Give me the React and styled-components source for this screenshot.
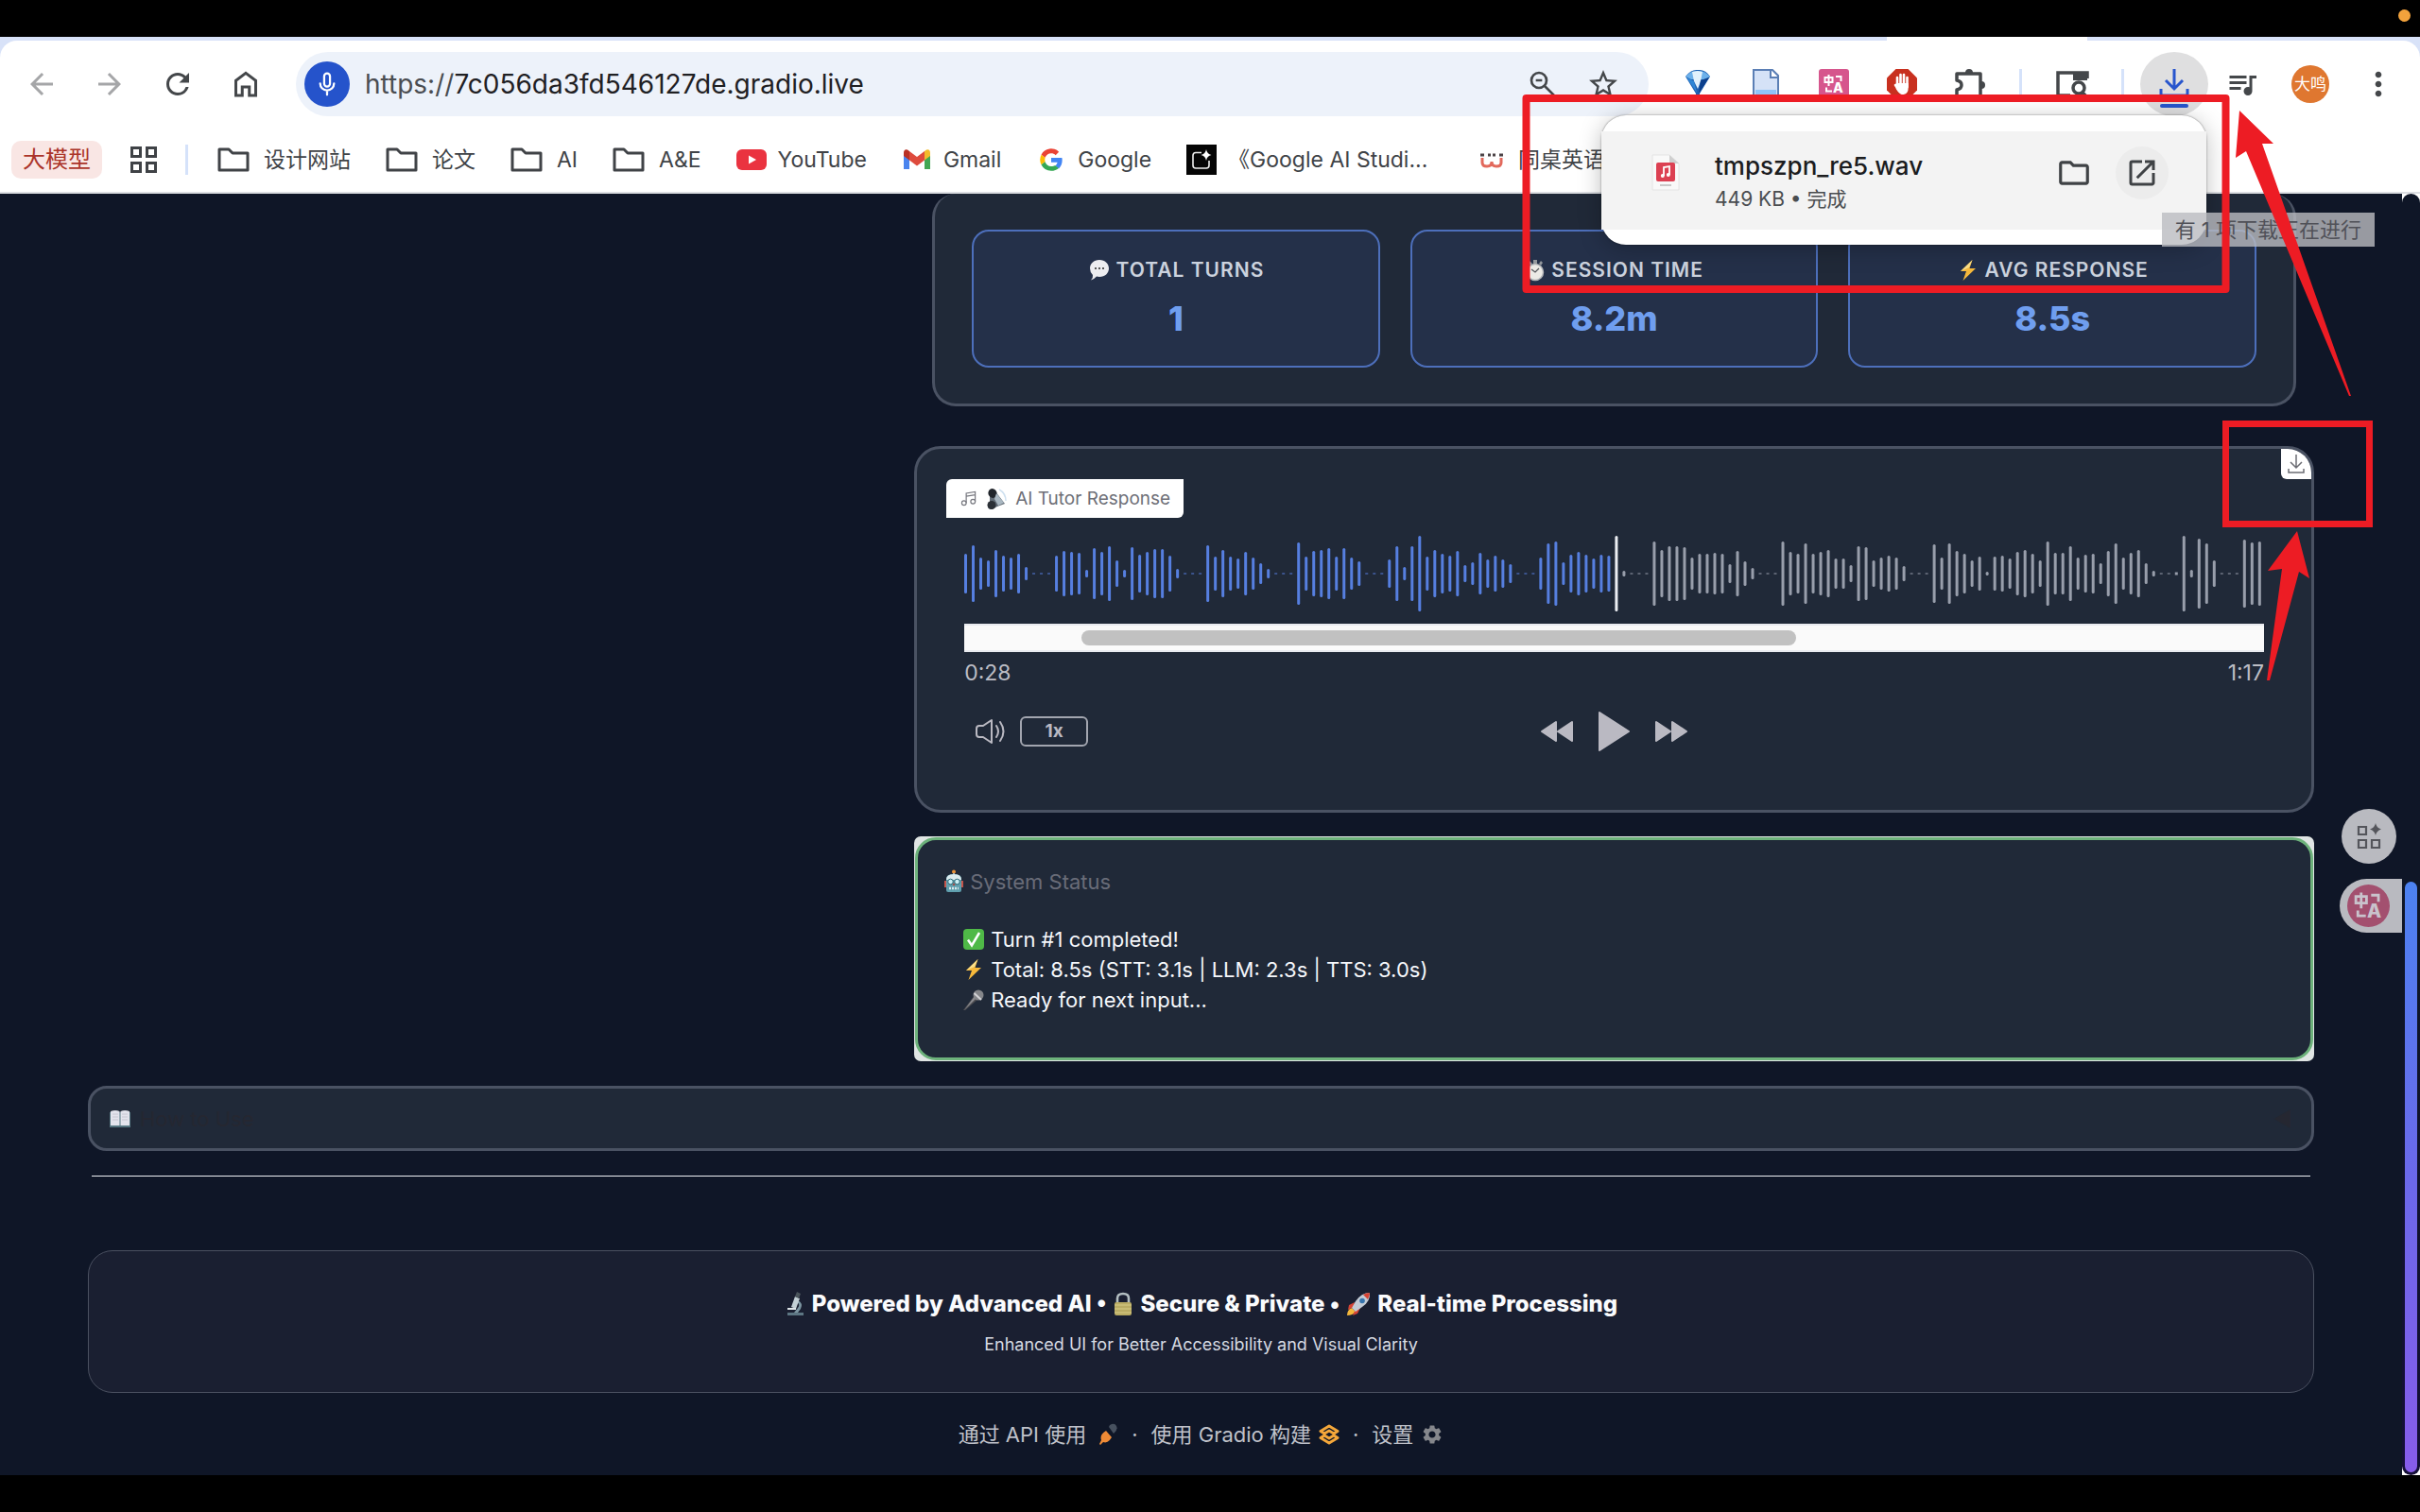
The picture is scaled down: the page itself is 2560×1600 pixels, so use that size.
import React from 'react';
import styled, { createGlobalStyle } from 'styled-components';
import {
  MdArrowBack,
  MdArrowForward,
  MdRefresh,
  MdStarOutline,
  MdMoreVert,
  MdQueueMusic,
  MdOutlineFolder,
  MdOpenInNew,
  MdSettings,
} from 'react-icons/md';

const GlobalStyle = createGlobalStyle`
  * {
    box-sizing: border-box;
  }

  body {
    margin: 0;
    background: #000;
    font-family: Inter, 'Noto Sans CJK SC', sans-serif;
  }

  button, input, textarea {
    font-family: inherit;
    margin: 0;
    padding: 0;
    border: 0;
    background: none;
    outline: none;
  }

  svg {
    display: block;
    flex: none;
  }
`;

/* ---------- layout ---------- */

const Screen = styled.div`
  position: relative;
  display: flex;
  flex-direction: column;
  min-height: 100vh;
  overflow: hidden;
`;

const MenuBar = styled.div`
  display: flex;
  align-items: center;
  justify-content: flex-end;
  height: 39px;
  padding: 0 10px 7px;
  background: #000;
`;

const RecordingDot = styled.span`
  width: 13px;
  height: 13px;
  border-radius: 50%;
  background: #f2a23c;
`;

const BottomBar = styled.div`
  height: 39px;
  background: #000;
`;

/* ---------- browser chrome ---------- */

const Chrome = styled.header`
  background: #d8e2f8;
  border-bottom: 2px solid #dcdee2;
`;

const TabStrip = styled.div`
  display: flex;
  justify-content: flex-end;
  height: 4px;
  padding-right: 352px;
`;

const ActiveTab = styled.div`
  width: 212px;
  background: #fff;
`;

const Bars = styled.div`
  background: #fff;
  border-radius: 18px 18px 0 0;
`;

const Toolbar = styled.div`
  display: flex;
  align-items: center;
  padding: 12px 8px 0;
`;

const ToolButton = styled.button`
  display: flex;
  align-items: center;
  justify-content: center;
  width: ${props => props.$width || 72}px;
  height: 68px;
  color: ${props => (props.$muted ? '#a5a6a8' : '#44474a')};
`;

const DownloadTool = styled(ToolButton)`
  border-radius: 50%;
  background: #dfdfe0;
  color: #2755cd;
`;

const Omnibox = styled.div`
  display: flex;
  align-items: center;
  flex: 1;
  height: 68px;
  margin: 0 16px 0 17px;
  padding: 0 16px 0 9px;
  border-radius: 34px;
  background: #edf2fa;
`;

const MicBadge = styled.span`
  display: flex;
  align-items: center;
  justify-content: center;
  width: 48px;
  height: 48px;
  margin-right: 16px;
  border-radius: 50%;
  background: #2553cb;
`;

const Scheme = styled.label`
  font-size: 28px;
  line-height: 36px;
  color: #4a4d51;
`;

const Address = styled.input`
  flex: 1;
  min-width: 0;
  font-size: 28px;
  line-height: 36px;
  color: #1f2023;
`;

const Divider = styled.span`
  width: 3px;
  height: 32px;
  margin: 0 17px 0 16px;
  background: #d5e2fa;
`;

const Avatar = styled.span`
  width: 40px;
  border-radius: 50%;
  background: #df7730;
  color: #fff;
  font-size: 17px;
  line-height: 40px;
  text-align: center;
`;

const Bookmarks = styled.nav`
  display: flex;
  align-items: center;
  gap: 37px;
  height: 80px;
  padding: 12px 12px 0;
  overflow: hidden;
`;

const GroupChip = styled.button`
  height: 40px;
  padding: 0 12px;
  margin-right: -8px;
  border-radius: 10px;
  background: #f9e6e4;
  color: #ab342a;
  font-size: 24px;
  line-height: 40px;
  white-space: nowrap;
`;

const BookmarkDivider = styled.span`
  flex: none;
  width: 3px;
  height: 32px;
  margin: 0 -6px 0 -8px;
  background: #d5e2fa;
`;

const Bookmark = styled.a`
  display: flex;
  align-items: center;
  flex: none;
  gap: ${props => (props.$folder ? 13 : 12)}px;
  min-width: ${props => props.$min || 0}px;
  color: #404347;
  font-size: 23px;
  line-height: 32px;
  text-decoration: none;
  white-space: nowrap;
`;

/* ---------- downloads bubble ---------- */

const DownloadBubble = styled.section`
  position: absolute;
  top: 122px;
  right: 226px;
  width: 640px;
  padding: 17px 0 16px;
  border-radius: 26px;
  background: #fff;
  box-shadow: 0 0 2px rgba(0, 0, 0, 0.5), 0 4px 24px rgba(0, 0, 0, 0.25);
`;

const DownloadRow = styled.div`
  display: flex;
  align-items: center;
  height: 104px;
  padding: 0 40px 16px 52px;
  background: #f3f3f3;
`;

const DownloadInfo = styled.div`
  flex: 1;
  padding-top: 20px;
  margin-left: 36px;
`;

const FileName = styled.div`
  color: #1c1d1f;
  font-size: 26px;
  font-weight: 500;
  line-height: 36px;
`;

const FileMeta = styled.div`
  color: #4a4d50;
  font-size: 21px;
  line-height: 34px;
`;

const BubbleButton = styled.button`
  display: flex;
  align-items: center;
  justify-content: center;
  width: 56px;
  height: 56px;
  margin-left: 16px;
  border-radius: 50%;
  background: ${props => (props.$hover ? '#ececec' : 'transparent')};
  color: #3f4245;
`;

const Tooltip = styled.div`
  position: absolute;
  top: 225px;
  right: 48px;
  padding: 0 14px;
  background: rgba(186, 187, 192, 0.8);
  color: #505158;
  font-size: 22px;
  line-height: 36px;
  white-space: nowrap;
`;

const Annotations = styled.svg`
  position: absolute;
  top: 0;
  right: 0;
  pointer-events: none;
`;

/* ---------- app ---------- */

const Viewport = styled.div`
  display: flex;
  flex: 1;
  background: #0f1627;
`;

const Content = styled.main`
  flex: 1;
  padding: 0 93px;
`;

const Columns = styled.div`
  display: grid;
  grid-template-columns: 4fr 7fr;
  gap: 28px;
`;

const RightColumn = styled.div`
  grid-column: 2;
  display: flex;
  flex-direction: column;
`;

const StatsPanel = styled.section`
  display: grid;
  grid-template-columns: repeat(3, 1fr);
  gap: 32px;
  margin: 0 19px 42px;
  padding: 38px 39px;
  border: 3px solid #4a5263;
  border-top: 0;
  border-radius: 25px;
  background: #202938;
`;

const StatCard = styled.div`
  padding: 25px 16px 26px;
  border: 2px solid #4d6fbb;
  border-radius: 18px;
  background: #243049;
  text-align: center;
`;

const StatLabel = styled.div`
  display: flex;
  align-items: center;
  justify-content: center;
  gap: 6px;
  color: #cbd2de;
  font-size: 21px;
  font-weight: 600;
  letter-spacing: 1px;
  line-height: 32px;
`;

const StatValue = styled.div`
  margin-top: 11px;
  color: #6f9eef;
  font-size: 36px;
  font-weight: 800;
  line-height: 48px;
`;

const AudioPanel = styled.section`
  position: relative;
  padding: 32px 31px 62px;
  border: 3px solid #4a5263;
  border-radius: 28px;
  background: #202938;
  overflow: hidden;
`;

const AudioLabel = styled.div`
  display: inline-flex;
  align-items: center;
  gap: 8px;
  height: 41px;
  padding: 0 14px;
  border-radius: 6px 0;
  background: #fff;
  color: #6e6f77;
  font-size: 19px;
  line-height: 28px;
`;

const Player = styled.div`
  padding: 19px 19px 0;
`;

const Waveform = styled.svg`
  width: 100%;
  height: 80px;
`;

const ScrollTrack = styled.div`
  height: 30px;
  margin-top: 13px;
  padding: 5px 0;
  border: solid #e9ebf0;
  border-width: 2px 0;
  background: #fafafa;
`;

const ScrollThumb = styled.div`
  width: 55%;
  height: 16px;
  margin: 0 9%;
  border-radius: 8px;
  background: #c1c1c1;
`;

const Times = styled.div`
  display: flex;
  justify-content: space-between;
  margin-top: 6px;
  color: #bcbdc5;
  font-size: 23px;
  line-height: 32px;
`;

const Controls = styled.div`
  display: grid;
  grid-template-columns: 1fr auto 1fr;
  align-items: center;
  height: 42px;
  margin-top: 25px;
`;

const ControlGroup = styled.div`
  display: flex;
  align-items: center;
  gap: ${props => props.$gap}px;
  padding-left: ${props => props.$inset || 0}px;
`;

const IconButton = styled.button`
  color: #bab9c2;
`;

const SpeedButton = styled.button`
  width: 72px;
  height: 32px;
  border: 2px solid #a2a5af;
  border-radius: 6px;
  color: #bab9c2;
  font-size: 19px;
  font-weight: 700;
  line-height: 28px;
`;

const CornerDownload = styled.button`
  position: absolute;
  top: 0;
  right: 0;
  display: flex;
  align-items: center;
  justify-content: center;
  width: 32px;
  height: 32px;
  border-radius: 0 0 0 6px;
  background: #fff;
`;

const StatusBlock = styled.section`
  margin: 25px 0 26px;
  padding: 1px;
  border-radius: 7px;
  background: #e0e5e4;
`;

const StatusInner = styled.div`
  padding: 28px 28px 45px;
  border: 3px solid #6db27b;
  border-radius: 22px;
  background: #202938;
`;

const StatusLabel = styled.label`
  display: flex;
  align-items: center;
  gap: 7px;
  color: #696c78;
  font-size: 22px;
  line-height: 32px;
`;

const StatusBody = styled.div`
  display: flex;
  gap: 6px;
  margin: 29px 19px 0;
`;

const StatusIcons = styled.div`
  display: grid;
  grid-auto-rows: 32px;
  align-items: center;
`;

const StatusText = styled.textarea`
  flex: 1;
  height: 96px;
  resize: none;
  overflow: hidden;
  color: #f5f7fb;
  font-size: 22px;
  line-height: 32px;
`;

const Accordion = styled.button`
  display: flex;
  align-items: center;
  justify-content: space-between;
  width: 100%;
  height: 69px;
  padding: 0 20px;
  border: 3px solid #4a5263;
  border-radius: 20px;
  background: #202938;
  color: #252731;
  font-size: 22px;
  line-height: 32px;
`;

const AccordionTitle = styled.span`
  display: flex;
  align-items: center;
  gap: 10px;
`;

const Rule = styled.hr`
  height: 1px;
  margin: 26px 4px 78px;
  border: 0;
  background: #eef1f5;
`;

const FooterCard = styled.div`
  padding: 38px 24px 36px;
  border: 1px solid #4a5060;
  border-radius: 26px;
  background: #1a1f31;
  text-align: center;
`;

const FooterTitle = styled.div`
  display: flex;
  align-items: center;
  justify-content: center;
  gap: 7px;
  color: #fafbfd;
  font-size: 24px;
  font-weight: 800;
  line-height: 36px;
`;

const FooterNote = styled.div`
  margin-top: 11px;
  color: #d6dae2;
  font-size: 18px;
  line-height: 28px;
`;

const FooterLinks = styled.footer`
  display: flex;
  align-items: center;
  justify-content: center;
  gap: 14px;
  margin-top: 28px;
  color: #bfc1c9;
  font-size: 22px;
  line-height: 32px;
`;

const FooterLink = styled.a`
  display: flex;
  align-items: center;
  gap: 8px;
  color: inherit;
  text-decoration: none;
`;

const PageScroll = styled.div`
  display: flex;
  align-items: flex-end;
  width: 19px;
  background: #fff;
`;

const PageScrollTrack = styled.div`
  display: flex;
  flex-direction: column;
  justify-content: flex-end;
  width: 100%;
  height: 100%;
  padding: 3px;
  border-radius: 10px;
  background: linear-gradient(#0f1627 60%, #150f38);
`;

const PageScrollThumb = styled.div`
  flex: 0 0 46.3%;
  border-radius: 7px;
  background: linear-gradient(#4c82f1, #6b68ea 50%, #875cea);
`;

const FloatingTools = styled.div`
  position: absolute;
  top: 856px;
  right: 19px;
  display: flex;
  flex-direction: column;
  align-items: flex-end;
  gap: 16px;
`;

const RoundTool = styled.button`
  display: flex;
  align-items: center;
  justify-content: center;
  width: 58px;
  height: 58px;
  margin-right: 6px;
  border-radius: 50%;
  background: #b9bac0;
`;

const TranslateTool = styled.button`
  display: flex;
  align-items: center;
  width: 66px;
  height: 57px;
  padding-left: 8px;
  border-radius: 29px 0 0 29px;
  background: #b9bac0;
`;

/* ---------- drawings ---------- */

const HomeIcon = () => (
  <svg width="36" height="36" viewBox="0 0 24 24" fill="none" stroke="currentColor" strokeWidth="2">
    <path d="M5 20V9.500L12 4.200l7 5.300V20h-4.500v-6h-5v6z" />
  </svg>
);

const MicIcon = () => (
  <svg width="32" height="32" viewBox="0 0 24 24" fill="none" stroke="#fff" strokeWidth="1.700" strokeLinecap="round">
    <rect x="9.700" y="3.500" width="4.600" height="10.500" rx="2.300" />
    <path d="M6.500 11.500a5.500 5.500 0 0 0 11 0M12 17v3.500" />
  </svg>
);

const ZoomOutIcon = () => (
  <svg width="32" height="32" viewBox="0 0 24 24" fill="none" stroke="currentColor" strokeWidth="2">
    <circle cx="9" cy="9" r="6" />
    <path d="M6.500 9h5M13.500 13.500l8 8" />
  </svg>
);

const PuzzleIcon = () => (
  <svg width="36" height="38" viewBox="0 0 36 38" fill="none" stroke="currentColor" strokeWidth="3.500" strokeLinejoin="round">
    <path d="M4 8h25v25H4v-8q5-1 5-5t-5-5z" />
    <path d="M13 7a4 4 0 0 1 8 0zM30 16a4 4 0 0 1 0 8z" fill="currentColor" stroke="none" />
  </svg>
);

const DiamondIcon = () => (
  <svg width="32" height="36" viewBox="0 0 32 36">
    <path d="M3 10Q9 2 16 3q8-1 13 7L18 28v6h-4v-6z" fill="#1d5fb0" />
    <path d="M3 10Q9 3 16 4q7-1 13 6l-6 3H9z" fill="#6cb0ea" />
    <path d="M10 5l6-1 5 1-2 10-3 8-4-8z" fill="#e2f1fc" />
    <path d="M19 14l9-3-11 17z" fill="#0c3f8c" />
    <path d="M4 11l8 4 3 12z" fill="#2f86d6" />
  </svg>
);

const DocIcon = () => (
  <svg width="32" height="36" viewBox="0 0 32 36">
    <path d="M3 3h20l6 6v24H3z" fill="#d5e2f7" stroke="#5b7fb5" strokeWidth="2" />
    <path d="M21 3v8h8" fill="#fff" stroke="#5b7fb5" strokeWidth="2" />
    <path d="M5 24h22v8H5z" fill="#8fc3f8" />
  </svg>
);

const TranslateGlyph = ({ size, round, fill, color }) => (
  <svg width={size} height={size} viewBox="0 0 32 32">
    <rect width="32" height="32" rx={round ? 16 : 3} fill={fill} />
    <g fill="none" stroke={color} strokeWidth="2">
      <path d="M6.500 9h8v5h-8zM10.500 6v12" />
      <path d="M18 8h5.500v5M8 19.500v4h6" />
    </g>
    <text x="15" y="25" fontSize="14" fontWeight="800" fill={color}>A</text>
  </svg>
);

const HandIcon = () => (
  <svg width="32" height="32" viewBox="0 0 32 32">
    <path d="M9.500 0h13L32 9.500v13L22.500 32h-13L0 22.500v-13z" fill="#c8301f" />
    <g stroke="#fff" strokeWidth="2.600" strokeLinecap="round">
      <path d="M11 9v9M14.500 6v12M18 6v12M21.500 9v10M9 17l4 6" />
    </g>
    <path d="M9.700 15h13v5q0 6-5 7h-2q-3-1-6-6z" fill="#fff" />
  </svg>
);

const TabSearchIcon = () => (
  <svg width="36" height="32" viewBox="0 0 36 32" fill="none" stroke="currentColor" strokeWidth="3.500">
    <path d="M16 28H3V4h31v6" />
    <path d="M19 4h15v8H19z" fill="currentColor" stroke="none" />
    <circle cx="25" cy="20" r="6" />
    <path d="M29 25l6 6" />
  </svg>
);

const DownloadIcon = () => (
  <svg width="36" height="50" viewBox="0 0 36 50" fill="none" stroke="currentColor" strokeWidth="3">
    <path d="M18 9v21M9 21l9 9 9-9M4 30v7h28v-7" />
    <path d="M5 48h26" strokeWidth="4" strokeLinecap="round" />
  </svg>
);

const AppsIcon = () => (
  <svg width="30" height="30" viewBox="0 0 30 30" fill="none" stroke="#3f4246" strokeWidth="3">
    <path d="M2.500 2.500h9v9h-9zM18.500 2.500h9v9h-9zM2.500 18.500h9v9h-9zM18.500 18.500h9v9h-9z" />
  </svg>
);

const FolderIcon = () => (
  <svg width="36" height="32" viewBox="0 0 36 32" fill="none" stroke="currentColor" strokeWidth="3" strokeLinejoin="round">
    <path d="M2 5h10l4 4h16v18H2z" />
  </svg>
);

const YouTubeIcon = () => (
  <svg width="32" height="32" viewBox="0 0 32 32">
    <rect y="5" width="32" height="22" rx="6" fill="#ea3340" />
    <path d="M13 11.500v9l8-4.500z" fill="#fff" />
  </svg>
);

const GmailIcon = () => (
  <svg width="32" height="32" viewBox="0 0 32 32">
    <path d="M2 9v17h6V13z" fill="#4a84ee" />
    <path d="M30 9v17h-6V13z" fill="#42a753" />
    <path d="M24 7l2-1.500q4-1 4 3.500v3l-6 4.500z" fill="#f2bc2b" />
    <path d="M8 7L6 5.500Q2 4.500 2 9v3l6 4.500z" fill="#b93125" />
    <path d="M8 7l8 6 8-6v9.500l-8 6-8-6z" fill="#de4b3d" />
  </svg>
);

const GoogleIcon = () => (
  <svg width="32" height="32" viewBox="0 0 48 48">
    <path fill="#ea4335" d="M24 14c2.700 0 5.100 1 7 2.700l5.200-5.200A17.500 17.500 0 0 0 8.300 16.100l6.100 4.700C15.800 16.900 19.600 14 24 14z" />
    <path fill="#4285f4" d="M41.500 24.400c0-1.200-.1-2.400-.4-3.500H24V28h9.900c-.4 2.300-1.700 4.200-3.700 5.500l5.900 4.600c3.500-3.200 5.400-8 5.400-13.700z" />
    <path fill="#fbbc05" d="M14.400 27.200a10.500 10.500 0 0 1 0-6.500l-6.100-4.600a17.700 17.700 0 0 0 0 15.800z" />
    <path fill="#34a853" d="M24 41.700c4.800 0 8.800-1.600 11.800-4.300l-5.700-4.500c-1.600 1.100-3.700 1.700-6.100 1.700-4.500 0-8.200-3-9.600-7.300l-6.100 4.700A17.500 17.500 0 0 0 24 41.700z" />
  </svg>
);

const StudioIcon = () => (
  <svg width="32" height="32" viewBox="0 0 32 32">
    <rect width="32" height="32" fill="#050505" />
    <path d="M16 8.500H10q-3 0-3 3V22q0 3 3 3h11q3 0 3-3v-5" fill="none" stroke="#eee" strokeWidth="1.600" />
    <path d="M21 5q.8 5 5.500 6-4.700 1-5.500 6-.8-5-5.500-6 4.700-1 5.500-6z" fill="#fff" />
  </svg>
);

const DeskIcon = () => (
  <svg width="32" height="32" viewBox="-3 0 32 32" fill="none" strokeWidth="3">
    <path d="M3 14v5q0 4 5 4t5-5q0 5 5 5t5-4v-5" stroke="#e2695c" />
    <path d="M1 11h4M9 11h3M14 11h3M21 11h4" stroke="#4c4346" />
  </svg>
);

const AudioFileIcon = () => (
  <svg width="32" height="40" viewBox="0 0 32 40">
    <path d="M2 1h18l10 9v28H2z" fill="#f9f9f9" stroke="#e3e3e3" />
    <path d="M20 1l10 9H20z" fill="#cfcfcf" />
    <rect x="6" y="9" width="20" height="20" rx="2" fill="#dc4052" />
    <path d="M14 23v-9l6-1v9" fill="none" stroke="#fff" strokeWidth="1.800" />
    <circle cx="12.800" cy="23" r="2" fill="#fff" />
    <circle cx="18.800" cy="22" r="2" fill="#fff" />
    <path d="M10 33h12" stroke="#c9c9c9" strokeWidth="2" />
  </svg>
);

const SpeechIcon = () => (
  <svg width="24" height="24" viewBox="0 0 24 24">
    <path d="M12 1c6 0 10 4 10 9s-4 9-10 9q-1.500 0-3-.4Q6 22 3 22.500 5.500 20 5 17 2 14 2 10c0-5 4-9 10-9z" fill="#ededf0" />
    <path d="M7 10h2M11 10h2M15 10h2" stroke="#555" strokeWidth="2" />
  </svg>
);

const StopwatchIcon = () => (
  <svg width="22" height="24" viewBox="0 0 22 24">
    <path d="M9 1h4v4H9zM3 4l2-2 3 3-2 2zM19 4l-2-2-2 3 2 2z" fill="#93979c" />
    <circle cx="11" cy="14" r="8.500" fill="#eceae6" stroke="#b4b6b9" strokeWidth="1.500" />
    <path d="M7 11l4 3 4-4" fill="none" stroke="#55575c" strokeWidth="1.300" />
  </svg>
);

const BoltIcon = () => (
  <svg width="24" height="24" viewBox="0 0 24 24">
    <path d="M16.500 1L4 13h6L6.500 23 20 10h-6.500z" fill="#f6b93c" />
    <path d="M16.500 1L4 13l9-4z" fill="#fbe08a" />
  </svg>
);

const MusicIcon = () => (
  <svg width="19" height="19" viewBox="0 0 24 24" fill="none" stroke="#77787f" strokeWidth="1.500">
    <path d="M9 18V5l12-2v13M9 9l12-2" />
    <circle cx="6" cy="18" r="3" />
    <circle cx="18" cy="16" r="3" />
  </svg>
);

const SpeakerIcon = () => (
  <svg width="24" height="24" viewBox="0 0 24 24">
    <path d="M5 2q4-1 6 2l10 13-8 3-6 3q-4 0-4-3l2-5z" fill="#616b75" />
    <ellipse cx="8" cy="6" rx="4.500" ry="5" transform="rotate(-25 8 6)" fill="#20242a" />
    <ellipse cx="7" cy="18.500" rx="4.500" ry="4.500" fill="#2c3137" />
    <path d="M12 6l8 10-6 3-4-7z" fill="#a9b7c1" />
    <path d="M15 2q7 4 7 12" fill="none" stroke="#cfe1f0" strokeWidth="1.500" />
  </svg>
);

const VolumeIcon = () => (
  <svg width="32" height="28" viewBox="0 0 32 28" fill="none" stroke="currentColor" strokeWidth="2" strokeLinejoin="round" strokeLinecap="round">
    <path d="M2 11q0-3 3-3h4l9-6v24l-9-6H5q-3 0-3-3z" />
    <path d="M23 8q4 6 0 12M27 4q7 10 0 20" />
  </svg>
);

const SkipIcon = ({ flip }) => (
  <svg width="36" height="24" viewBox="0 0 36 24" fill="currentColor" stroke="currentColor" strokeWidth="2" strokeLinejoin="round">
    <path d={flip ? 'M2 2v20l15-10zM19 2v20l15-10z' : 'M17 2v20L2 12zM34 2v20L19 12z'} />
  </svg>
);

const PlayIcon = () => (
  <svg width="33" height="42" viewBox="0 0 33 42" fill="currentColor" stroke="currentColor" strokeWidth="2" strokeLinejoin="round">
    <path d="M1 1v40l31-20z" />
  </svg>
);

const TrayIcon = () => (
  <svg width="18" height="22" viewBox="0 0 18 22" fill="none" stroke="#6b6c73" strokeWidth="1.500">
    <path d="M9 1v14M3 9l6 6 6-6M1 16v4h16v-4" />
  </svg>
);

const RobotIcon = () => (
  <svg width="20" height="26" viewBox="0 0 20 26">
    <circle cx="10" cy="2.500" r="2" fill="#e8923a" />
    <path d="M9 4h2v3H9z" fill="#9db3bb" />
    <path d="M0 12h3v7H0zM17 12h3v7h-3z" fill="#c5554b" />
    <path d="M2 10q0-5 8-5t8 5v12q0 2-2 2H4q-2 0-2-2z" fill="#5f9fae" />
    <path d="M2 11q0-6 8-6t8 6z" fill="#dcecf0" />
    <circle cx="6.500" cy="13" r="2.800" fill="#c9eef5" stroke="#2e6674" />
    <circle cx="13.500" cy="13" r="2.800" fill="#c9eef5" stroke="#2e6674" />
    <path d="M10 14l-1.500 3h3z" fill="#a8453e" />
    <path d="M5 20h10" stroke="#d9e8ec" strokeWidth="2.500" strokeDasharray="2 1" />
  </svg>
);

const CheckIcon = () => (
  <svg width="24" height="24" viewBox="0 0 24 24">
    <rect x="1" y="1" width="22" height="22" rx="4" fill="#4fb947" />
    <path d="M6 12.500l4 6L18 5" fill="none" stroke="#fff" strokeWidth="2.500" />
  </svg>
);

const HandMicIcon = () => (
  <svg width="24" height="24" viewBox="0 0 24 24">
    <path d="M13 7l4 4L3 23H1z" fill="#4c4c50" />
    <path d="M13 8l2 2L2 23z" fill="#8b8b90" />
    <circle cx="17" cy="7" r="5.500" fill="#85868a" />
    <path d="M12.500 5l7.500 7" stroke="#d3d3d6" strokeWidth="2" />
  </svg>
);

const BookIcon = () => (
  <svg width="22" height="18" viewBox="0 0 22 18">
    <path d="M0 2h22v16H0z" fill="#557681" />
    <path d="M1 1q5-2 9.500 0v15H1zM11.500 1Q16-1 21 1v15h-9.500z" fill="#e3e3ec" />
    <path d="M3 4h6M3 7h6M3 10h6M13 4h6M13 7h6M13 10h6" stroke="#c7c7d2" />
  </svg>
);

const MicroscopeIcon = () => (
  <svg width="22" height="26" viewBox="0 0 22 26">
    <path d="M3 22h17v3H3z" fill="#5d7683" />
    <path d="M14 9q6 3 3 9l-3 4h-4l4-5q3-4-1-6z" fill="#7c95a1" />
    <path d="M11 5l5 2-4 11-5-2z" fill="#c3d0d6" />
    <path d="M13 0l4 2-2 5-4-2z" fill="#4a545b" />
    <path d="M3 17h9v2H3z" fill="#dfe6e9" />
  </svg>
);

const LockIcon = () => (
  <svg width="22" height="26" viewBox="0 0 22 26">
    <path d="M5 13V7q0-5 6-5t6 5v6" fill="none" stroke="#b3bec1" strokeWidth="2.600" />
    <rect x="2" y="11" width="18" height="14" rx="2" fill="#b9ab63" />
    <path d="M2 14h18M2 18h18M2 22h18" stroke="#d6cb88" />
  </svg>
);

const RocketIcon = () => (
  <svg width="26" height="26" viewBox="0 0 26 26">
    <path d="M1 25q0-6 5-8l4 4q-3 4-9 4z" fill="#f4b73c" />
    <path d="M9 11l-6 3-1 5 6-3zM15 17l-3 6-5 2 3-7z" fill="#d54335" />
    <path d="M25 1q-9 0-15 9l-4 7 4 4 7-5Q26 10 25 1z" fill="#c3cbd5" />
    <path d="M25 1q-4 0-7 2l5 5q2-4 2-7z" fill="#d54335" />
    <circle cx="17" cy="9.500" r="2.800" fill="#3674ae" />
  </svg>
);

const PlugIcon = () => (
  <svg width="26" height="24" viewBox="-5 0 26 24">
    <path d="M12 2q5-3 7 1t-3 8l-5-7z" fill="#47515f" />
    <path d="M8 8l6 7q-4 7-9 5l-3 3-1-1 2-4q-2-6 5-10z" fill="#f08b36" />
  </svg>
);

const GradioIcon = () => (
  <svg width="22" height="22" viewBox="0 0 22 22" fill="none" stroke="#f4a73a" strokeWidth="3" strokeLinejoin="round">
    <path d="M11 2L2 7.500 6 10l5-3 5 3 4-2.500z" />
    <path d="M11 20l-9-5.500L6 12l5 3 5-3 4 2.500z" />
  </svg>
);

const WidgetsIcon = () => (
  <svg width="26" height="28" viewBox="0 0 26 28" fill="none" stroke="#54555b" strokeWidth="2.200">
    <path d="M2 4h8v8H2zM2 18h8v8H2zM16 18h8v8h-8z" />
    <path d="M20 0q1 5 6 6.500-5 1.500-6 6.500-1-5-6-6.500 5-1.500 6-6.500z" fill="#54555b" stroke="none" />
  </svg>
);

/* ---------- data ---------- */

const bookmarks = [
  { label: '设计网站', folder: true },
  { label: '论文', folder: true },
  { label: 'AI', folder: true },
  { label: 'A&E', folder: true },
  { label: 'YouTube', icon: YouTubeIcon },
  { label: 'Gmail', icon: GmailIcon },
  { label: 'Google', icon: GoogleIcon },
  { label: '《Google AI Studi...', icon: StudioIcon, min: 270 },
  { label: '同桌英语', icon: DeskIcon },
];

const stats = [
  { label: 'TOTAL TURNS', value: '1', icon: SpeechIcon },
  { label: 'SESSION TIME', value: '8.2m', icon: StopwatchIcon },
  { label: 'AVG RESPONSE', value: '8.5s', icon: BoltIcon },
];

// one entry per bar, 1 is silence
const levels = [
  42, 60, 34, 28, 50, 38, 34, 42, 14, 1, 1, 1, 38, 48, 46, 44, 8, 54, 46, 58, 28, 8,
  56, 40, 46, 52, 52, 38, 10, 1, 1, 1, 60, 36, 50, 36, 32, 46, 34, 22, 10, 1, 1, 1,
  66, 36, 48, 50, 54, 36, 54, 34, 26, 1, 1, 1, 30, 58, 14, 58, 80, 36, 50, 42, 38, 48,
  18, 24, 44, 30, 38, 30, 20, 1, 1, 1, 34, 64, 68, 24, 40, 46, 40, 32, 40, 38, 80, 6,
  1, 1, 1, 68, 50, 58, 58, 56, 34, 42, 42, 44, 42, 20, 48, 26, 12, 1, 1, 1, 68, 46,
  42, 64, 42, 46, 50, 32, 32, 18, 58, 56, 28, 34, 38, 34, 16, 1, 1, 1, 62, 34, 64, 48,
  42, 28, 36, 4, 36, 38, 32, 46, 50, 42, 28, 68, 44, 44, 58, 34, 40, 42, 22, 48, 64,
  34, 44, 50, 22, 6, 1, 1, 3, 80, 8, 74, 64, 28, 1, 1, 1, 72, 66, 68,
];
const CURSOR = 86;

const barColor = (i) => {
  if (i === CURSOR) return '#eceef3';
  return i < CURSOR ? '#567fe0' : '#989eab';
};

const statusLines = [
  'Turn #1 completed!',
  'Total: 8.5s (STT: 3.1s | LLM: 2.3s | TTS: 3.0s)',
  'Ready for next input...',
].join('\n');

const BrowserChrome = () => (
  <Chrome>
    <TabStrip><ActiveTab /></TabStrip>
    <Bars>
      <Toolbar>
        <ToolButton $muted aria-label="Back"><MdArrowBack size={36} /></ToolButton>
        <ToolButton $muted aria-label="Forward"><MdArrowForward size={36} /></ToolButton>
        <ToolButton aria-label="Reload"><MdRefresh size={36} /></ToolButton>
        <ToolButton aria-label="Home"><HomeIcon /></ToolButton>
        <Omnibox>
          <MicBadge><MicIcon /></MicBadge>
          <Scheme htmlFor="address">https://</Scheme>
          <Address id="address" defaultValue="7c056da3fd546127de.gradio.live" />
          <ToolButton $width={64} aria-label="Zoom"><ZoomOutIcon /></ToolButton>
          <ToolButton $width={64} aria-label="Bookmark"><MdStarOutline size={36} /></ToolButton>
        </Omnibox>
        <ToolButton aria-label="Diamond"><DiamondIcon /></ToolButton>
        <ToolButton aria-label="Notes"><DocIcon /></ToolButton>
        <ToolButton aria-label="Translate"><TranslateGlyph size={32} fill="#d6568d" color="#fff" /></ToolButton>
        <ToolButton aria-label="Blocker"><HandIcon /></ToolButton>
        <ToolButton aria-label="Extensions"><PuzzleIcon /></ToolButton>
        <Divider />
        <ToolButton aria-label="Search tabs"><TabSearchIcon /></ToolButton>
        <Divider />
        <DownloadTool aria-label="Downloads"><DownloadIcon /></DownloadTool>
        <ToolButton aria-label="Media"><MdQueueMusic size={36} /></ToolButton>
        <ToolButton><Avatar>大鸣</Avatar></ToolButton>
        <ToolButton aria-label="Menu"><MdMoreVert size={40} /></ToolButton>
      </Toolbar>
      <Bookmarks>
        <GroupChip>大模型</GroupChip>
        <AppsIcon />
        <BookmarkDivider />
        {bookmarks.map(({ label, folder, icon: Icon, min }) => (
          <Bookmark key={label} href="#" $folder={folder} $min={min}>
            {folder ? <FolderIcon /> : <Icon />}
            {label}
          </Bookmark>
        ))}
      </Bookmarks>
    </Bars>
  </Chrome>
);

const AudioPlayer = () => (
  <AudioPanel>
    <AudioLabel>
      <MusicIcon />
      <SpeakerIcon />
      AI Tutor Response
    </AudioLabel>
    <CornerDownload aria-label="Download"><TrayIcon /></CornerDownload>
    <Player>
      <Waveform viewBox="0 0 1374 80" preserveAspectRatio="none">
        {levels.map((h, i) => (
          <rect key={i} x={i * 8} y={40 - h / 2} width="3" height={h} rx={h > 3 ? 1.5 : 0} fill={barColor(i)} />
        ))}
      </Waveform>
      <ScrollTrack><ScrollThumb /></ScrollTrack>
      <Times>
        <span>0:28</span>
        <span>1:17</span>
      </Times>
      <Controls>
        <ControlGroup $gap={16} $inset={11}>
          <IconButton aria-label="Volume"><VolumeIcon /></IconButton>
          <SpeedButton>1x</SpeedButton>
        </ControlGroup>
        <ControlGroup $gap={26}>
          <IconButton aria-label="Rewind"><SkipIcon /></IconButton>
          <IconButton aria-label="Play"><PlayIcon /></IconButton>
          <IconButton aria-label="Forward"><SkipIcon flip /></IconButton>
        </ControlGroup>
      </Controls>
    </Player>
  </AudioPanel>
);

const SystemStatus = () => (
  <StatusBlock>
    <StatusInner>
      <StatusLabel htmlFor="status"><RobotIcon />System Status</StatusLabel>
      <StatusBody>
        <StatusIcons>
          <CheckIcon />
          <BoltIcon />
          <HandMicIcon />
        </StatusIcons>
        <StatusText id="status" readOnly value={statusLines} />
      </StatusBody>
    </StatusInner>
  </StatusBlock>
);

const App = () => (
  <Screen>
    <GlobalStyle />
    <MenuBar><RecordingDot /></MenuBar>
    <BrowserChrome />
    <Viewport>
      <Content>
        <Columns>
          <RightColumn>
            <StatsPanel>
              {stats.map(({ label, value, icon: Icon }) => (
                <StatCard key={label}>
                  <StatLabel><Icon />{label}</StatLabel>
                  <StatValue>{value}</StatValue>
                </StatCard>
              ))}
            </StatsPanel>
            <AudioPlayer />
            <SystemStatus />
          </RightColumn>
        </Columns>
        <Accordion>
          <AccordionTitle><BookIcon />How to Use</AccordionTitle>
          <span>◀</span>
        </Accordion>
        <Rule />
        <FooterCard>
          <FooterTitle>
            <MicroscopeIcon />
            <span>Powered by Advanced AI •</span>
            <LockIcon />
            <span>Secure &amp; Private •</span>
            <RocketIcon />
            <span>Real-time Processing</span>
          </FooterTitle>
          <FooterNote>Enhanced UI for Better Accessibility and Visual Clarity</FooterNote>
        </FooterCard>
        <FooterLinks>
          <FooterLink href="#">通过 API 使用 <PlugIcon /></FooterLink>
          <span>·</span>
          <FooterLink href="#">使用 Gradio 构建 <GradioIcon /></FooterLink>
          <span>·</span>
          <FooterLink href="#">设置 <MdSettings size={24} color="#85878c" /></FooterLink>
        </FooterLinks>
      </Content>
      <PageScroll>
        <PageScrollTrack><PageScrollThumb /></PageScrollTrack>
      </PageScroll>
    </Viewport>
    <BottomBar />
    <FloatingTools>
      <RoundTool aria-label="Widgets"><WidgetsIcon /></RoundTool>
      <TranslateTool aria-label="Translate page">
        <TranslateGlyph size={45} round fill="#a3506f" color="#c9c3cc" />
      </TranslateTool>
    </FloatingTools>
    <DownloadBubble>
      <DownloadRow>
        <AudioFileIcon />
        <DownloadInfo>
          <FileName>tmpszpn_re5.wav</FileName>
          <FileMeta>449 KB • 完成</FileMeta>
        </DownloadInfo>
        <BubbleButton aria-label="Show in folder"><MdOutlineFolder size={38} /></BubbleButton>
        <BubbleButton $hover aria-label="Open"><MdOpenInNew size={36} /></BubbleButton>
      </DownloadRow>
    </DownloadBubble>
    <Tooltip>有 1 项下载正在进行</Tooltip>
    <Annotations width="2560" height="1600" viewBox="0 0 2560 1600" fill="none" stroke="#ed1c24">
      <rect x="1614.500" y="104" width="740" height="202" strokeWidth="8" strokeLinejoin="round" />
      <rect x="2354.500" y="448.500" width="152" height="106" strokeWidth="7" />
      <g fill="#ed1c24" stroke="none">
        <path d="M2369 117l36 35h-12l94 267h-2L2376 160l-11 7z" />
        <path d="M2430 562l13 50-11-7-31 115h-3l16-118-15 2z" />
      </g>
    </Annotations>
  </Screen>
);

export default App;
